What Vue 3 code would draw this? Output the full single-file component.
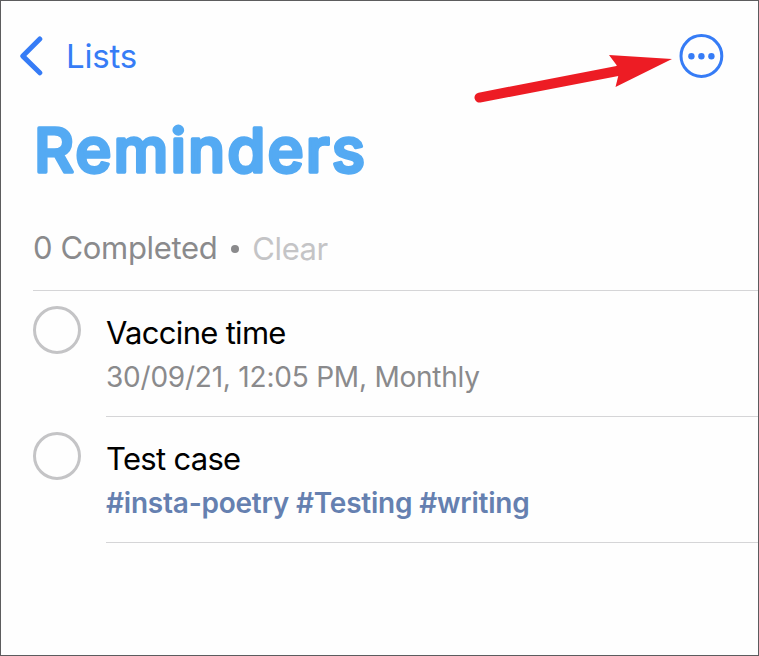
<script setup>
import { ref, computed } from 'vue'

const reminders = ref([
  { id: 1, title: 'Vaccine time', due: '30/09/21, 12:05 PM, Monthly', tags: [], done: false },
  { id: 2, title: 'Test case', due: '', tags: ['insta-poetry', 'Testing', 'writing'], done: false },
])

const completedCount = computed(() => reminders.value.filter(r => r.done).length)

function formatTags(tags) {
  return tags.map(t => '#' + t).join(' ')
}

function clearCompleted() {
  reminders.value = reminders.value.filter(r => !r.done)
}
</script>

<template>
  <div class="screen">
    <header class="nav">
      <button class="back">
        <svg class="chevron" width="24" height="40" viewBox="0 0 24 40">
          <path d="M20.8 3 3.8 20.1 20.8 36.8" />
        </svg>
        <span class="back-label">Lists</span>
      </button>
      <button class="more" aria-label="More">
        <svg width="46" height="46" viewBox="0 0 46 46">
          <circle class="ring" cx="23.4" cy="23" r="20.4" />
          <circle cx="13.4" cy="23.2" r="3.2" />
          <circle cx="23.4" cy="23.2" r="3.2" />
          <circle cx="33.4" cy="23.2" r="3.2" />
        </svg>
      </button>
      <svg class="arrow" width="203" height="56" viewBox="0 0 203 56">
        <path class="shaft" d="M9.5 47.6 150 20.5" />
        <path d="M139 5 202 9 145.5 37 148.5 25 146.5 15Z" />
      </svg>
    </header>

    <h1 class="title">
      <svg width="360" height="80" viewBox="0 0 360 80">
        <text x="0" y="60.5" textLength="333" lengthAdjust="spacingAndGlyphs">Reminders</text>
      </svg>
    </h1>

    <div class="summary">
      <span class="count">{{ completedCount }} Completed</span>
      <span class="dot"></span>
      <button class="clear" @click="clearCompleted">Clear</button>
    </div>

    <ul class="list">
      <li class="row" v-for="item in reminders" :key="item.id">
        <button
          class="check"
          :class="{ checked: item.done }"
          @click="item.done = !item.done"
        ></button>
        <div class="body">
          <p class="name">{{ item.title }}</p>
          <p v-if="item.due" class="due">{{ item.due }}</p>
          <p v-if="item.tags.length" class="tags">{{ formatTags(item.tags) }}</p>
        </div>
      </li>
    </ul>
  </div>
</template>

<style>
body {
  margin: 0;
  background: #fff;
}
</style>

<style scoped>
.screen {
  box-sizing: border-box;
  width: 100%;
  height: 656px;
  border: 1px solid #5c5c5e;
  background: #fefefe;
  overflow: hidden;
  font-family: Inter, "Liberation Sans", sans-serif;
}

button {
  padding: 0;
  border: none;
  background: none;
  font: inherit;
  color: inherit;
  cursor: pointer;
}

.nav {
  position: relative;
  display: flex;
  justify-content: space-between;
  align-items: center;
  height: 110px;
  padding: 0 34px 0 18px;
  color: #367cf6;
}

.back {
  display: flex;
  align-items: center;
  gap: 23px;
}

.back-label {
  font-size: 33px;
  line-height: 40px;
  letter-spacing: -0.2px;
}

.chevron path {
  fill: none;
  stroke: #367cf6;
  stroke-width: 5;
  stroke-linecap: round;
  stroke-linejoin: round;
}

.more {
  display: flex;
}

.more circle {
  fill: #367cf6;
}

.more .ring {
  fill: none;
  stroke: #367cf6;
  stroke-width: 3;
}

/* points at the more button */
.arrow {
  position: absolute;
  left: 469px;
  top: 49px;
  fill: #ed1c24;
}

.arrow .shaft {
  fill: none;
  stroke: #ed1c24;
  stroke-width: 10;
  stroke-linecap: round;
}

.title {
  height: 80px;
  margin: 0;
  padding-left: 33px;
}

.title svg {
  display: block;
}

.title text {
  font-family: Inter, "Liberation Sans", sans-serif;
  font-size: 61px;
  font-weight: 450;
  letter-spacing: 2px;
  fill: #54aaf3;
  stroke: #54aaf3;
  stroke-width: 3.3;
  stroke-linejoin: round;
}

.summary {
  box-sizing: border-box;
  display: flex;
  align-items: center;
  height: 100px;
  margin-left: 32px;
  padding-top: 14px;
  border-bottom: 1px solid #d5d5d7;
  font-size: 31px;
  color: #8a8a8c;
}

.count {
  letter-spacing: -0.35px;
}

.dot {
  width: 8px;
  height: 8px;
  margin: 3px 13px 0 14px;
  border-radius: 50%;
  background: #8a8a8c;
}

.clear {
  margin-top: 1px;
  letter-spacing: -0.4px;
  color: #c4c4c6;
}

.list {
  margin: 0;
  padding: 0 0 0 32px;
  list-style: none;
}

.row {
  display: flex;
  gap: 25px;
}

.check {
  box-sizing: border-box;
  flex: none;
  width: 48px;
  height: 48px;
  margin-top: 15px;
  border: 3px solid #c4c4c6;
  border-radius: 50%;
}

.check.checked {
  border-color: #54aaf3;
  background: #54aaf3;
}

.body {
  box-sizing: border-box;
  flex: 1;
  height: 126px;
  padding-top: 22px;
  border-bottom: 1px solid #d5d5d7;
}

.body p {
  margin: 0;
  white-space: nowrap;
}

.name {
  font-size: 31px;
  line-height: 40px;
  letter-spacing: -0.7px;
  color: #000;
}

.due,
.tags {
  padding-top: 5px;
  font-size: 28px;
  line-height: 38px;
  letter-spacing: -0.22px;
}

.due {
  color: #8a8a8c;
}

.tags {
  font-weight: 600;
  color: #6580b0;
}
</style>
